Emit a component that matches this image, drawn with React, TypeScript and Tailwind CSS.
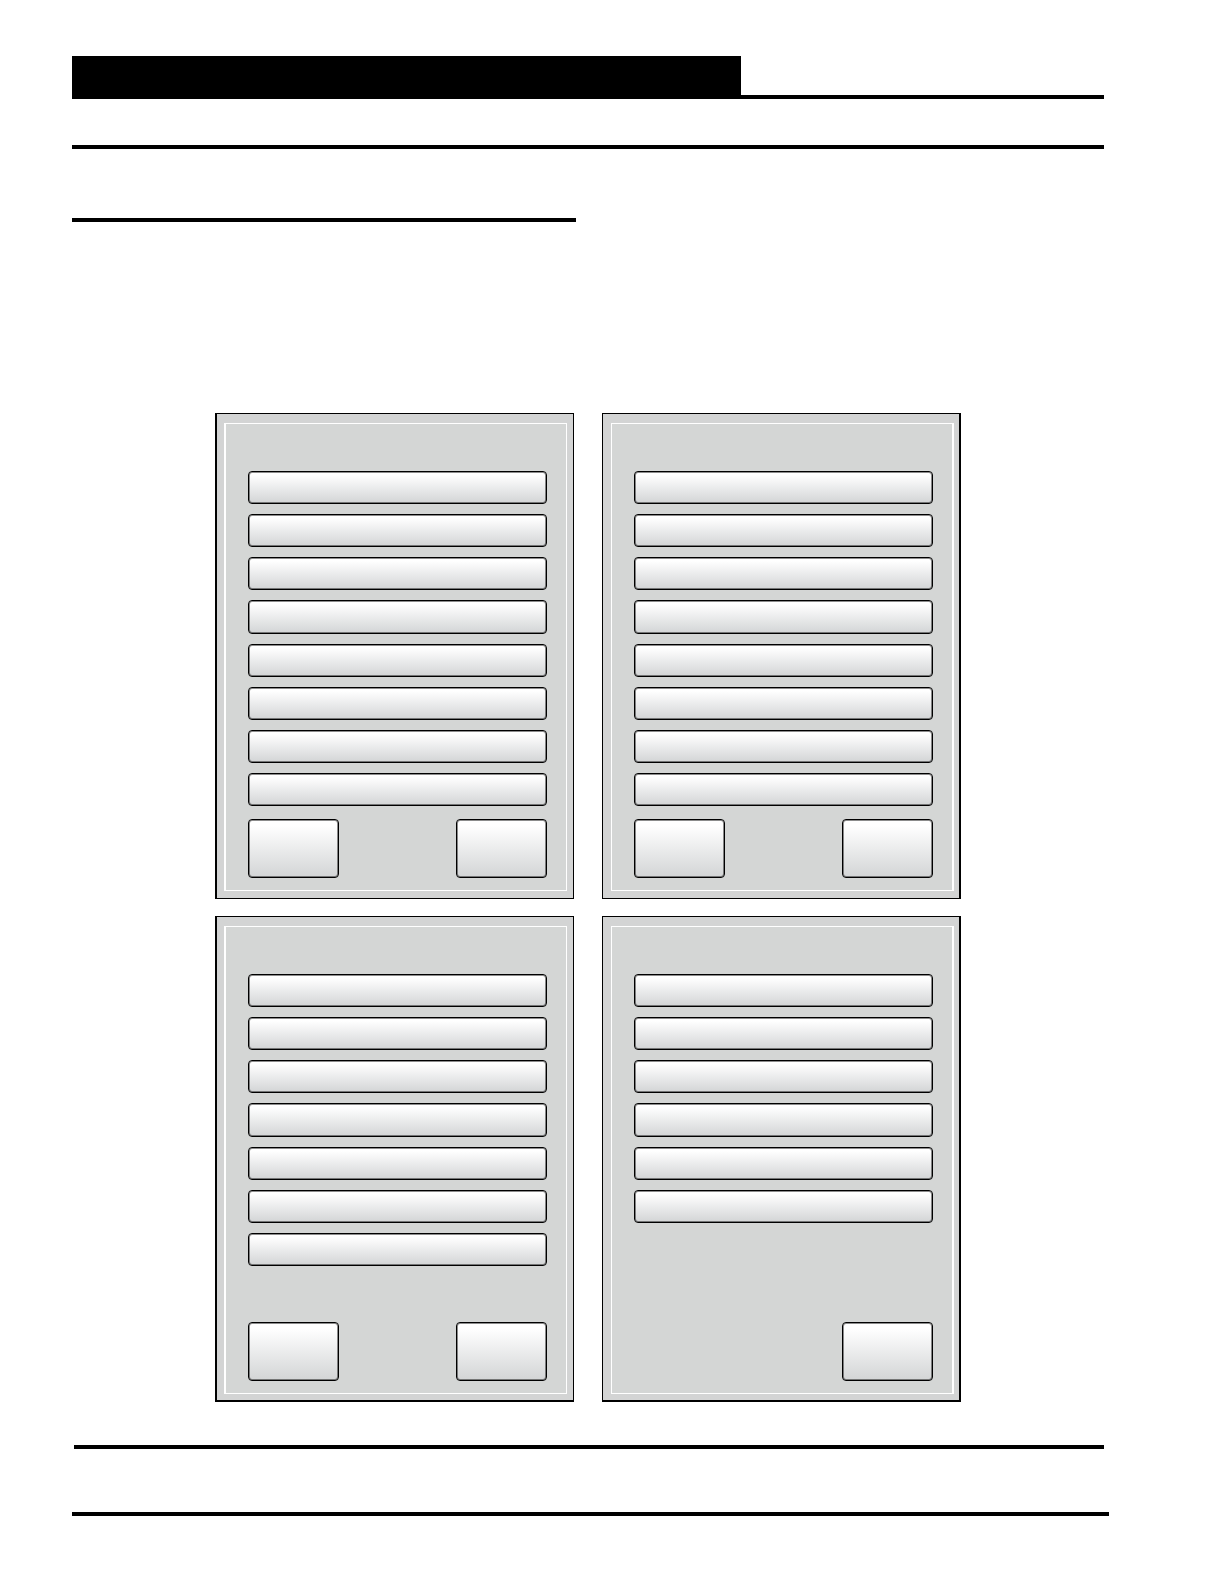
import React from "react";
import clsx from "clsx";

type Screen = {
  name: string;
  rows: number;
  left: boolean;
  right: boolean;
  frame: string;
  inner: string;
};

const screens: Screen[] = [
  {
    name: "Screen 1",
    rows: 8,
    left: true,
    right: true,
    frame: "border-l-2 pl-[7px] pr-[6px] pb-[7px]",
    inner: "border-l-2",
  },
  {
    name: "Screen 2",
    rows: 8,
    left: true,
    right: true,
    frame: "border-r-2 pl-[8px] pr-[5px] pb-[7px]",
    inner: "border-r-2",
  },
  {
    name: "Screen 3",
    rows: 7,
    left: true,
    right: true,
    frame: "border-l-2 border-b-2 pl-[7px] pr-[6px] pb-[6px]",
    inner: "border-l-2",
  },
  {
    name: "Screen 4",
    rows: 6,
    left: false,
    right: true,
    frame: "border-r-2 border-b-2 pl-[8px] pr-[5px] pb-[6px]",
    inner: "border-r-2",
  },
];

function Key({ label, className }: { label: string; className?: string }) {
  return (
    <button
      type="button"
      aria-label={label}
      className={clsx(
        "rounded-[4px] border border-black bg-linear-to-b from-white from-10% to-[#d3d5d6] shadow-[inset_0_0_0_1px_rgba(0,0,0,0.45)]",
        className
      )}
    />
  );
}

function Panel({ screen }: { screen: Screen }) {
  return (
    <section
      aria-label={screen.name}
      className={clsx("border border-black bg-[#d3d4d4] pt-[9px]", screen.frame)}
    >
      <div
        className={clsx(
          "border border-white bg-[#d4d6d5] pt-[47px] pr-[19px] pb-3 pl-[22px]",
          screen.inner
        )}
      >
        <div className="grid h-[335px] grid-rows-8 gap-[10px]">
          {Array.from({ length: screen.rows }, (_, i) => (
            <Key key={i} label={`Option ${i + 1}`} />
          ))}
        </div>
        <div className="mt-[13px] flex h-[59px]">
          {screen.left && <Key label="Left key" className="w-[91px]" />}
          {screen.right && <Key label="Right key" className="ml-auto w-[91px]" />}
        </div>
      </div>
    </section>
  );
}

export default function App() {
  return (
    <div className="min-h-screen bg-white pt-14 pr-[115px] pb-[68px] pl-[72px]">
      <header className="mr-[5px]">
        <div className="border-b-4 border-black">
          <div className="h-[39px] w-[669px] max-w-full bg-black" />
        </div>
        <div className="mt-[46px] h-1 bg-black" />
        <div className="mt-[69px] h-1 w-[504px] max-w-full bg-black" />
      </header>

      <main className="mt-[191px] mr-[5px]">
        <div className="mx-auto grid max-w-[746px] grid-cols-2 gap-x-7 gap-y-[17px]">
          {screens.map((screen) => (
            <Panel key={screen.name} screen={screen} />
          ))}
        </div>
      </main>

      <footer className="mt-[43px]">
        <div className="mr-[5px] ml-[2px] h-1 bg-black" />
        <div className="mt-[63px] h-1 bg-black" />
      </footer>
    </div>
  );
}
